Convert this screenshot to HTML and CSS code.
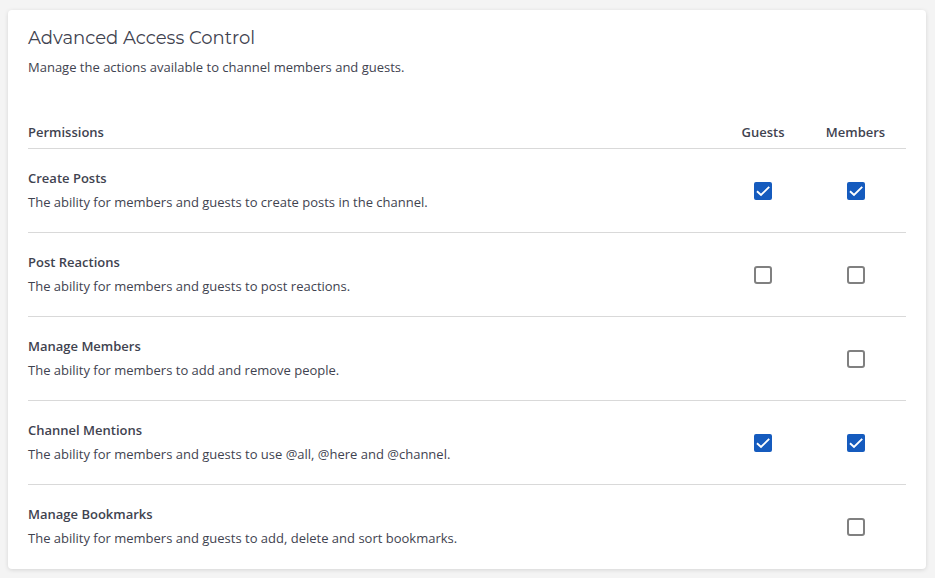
FILE: index.html
```html
<!DOCTYPE html>
<html lang="en">
<head>
<meta charset="utf-8">
<title>Advanced Access Control</title>
<link rel="stylesheet" href="styles.css">
</head>
<body>
<main class="panel">
  <header class="panel-header">
    <h1>Advanced Access Control</h1>
    <p>Manage the actions available to channel members and guests.</p>
  </header>
  <table class="permissions">
    <thead>
      <tr><th scope="col" class="name">Permissions</th><th scope="col" class="guests" id="guests">Guests</th><th scope="col" class="members" id="members">Members</th></tr>
    </thead>
    <tbody>
      <tr>
        <td class="name"><div class="title" id="posts">Create Posts</div><div class="description">The ability for members and guests to create posts in the channel.</div></td>
        <td><input type="checkbox" aria-labelledby="posts guests" checked></td>
        <td><input type="checkbox" aria-labelledby="posts members" checked></td>
      </tr>
      <tr>
        <td class="name"><div class="title" id="reactions">Post Reactions</div><div class="description">The ability for members and guests to post reactions.</div></td>
        <td><input type="checkbox" aria-labelledby="reactions guests"></td>
        <td><input type="checkbox" aria-labelledby="reactions members"></td>
      </tr>
      <tr>
        <td class="name"><div class="title" id="manage">Manage Members</div><div class="description">The ability for members to add and remove people.</div></td>
        <td></td>
        <td><input type="checkbox" aria-labelledby="manage members"></td>
      </tr>
      <tr>
        <td class="name"><div class="title" id="mentions">Channel Mentions</div><div class="description">The ability for members and guests to use @all, @here and @channel.</div></td>
        <td><input type="checkbox" aria-labelledby="mentions guests" checked></td>
        <td><input type="checkbox" aria-labelledby="mentions members" checked></td>
      </tr>
      <tr>
        <td class="name"><div class="title" id="bookmarks">Manage Bookmarks</div><div class="description">The ability for members and guests to add, delete and sort bookmarks.</div></td>
        <td></td>
        <td><input type="checkbox" aria-labelledby="bookmarks members"></td>
      </tr>
    </tbody>
  </table>
</main>
</body>
</html>
```
FILE: styles.css
```css
* {
  box-sizing: border-box;
}

body {
  margin: 0;
  padding: 10px 9px 9px 8px;
  background: #f4f4f4;
  color: #3f4350;
  font: 13px/20px "Open Sans", sans-serif;
}

.panel {
  padding: 16px 20px 0;
  background: #fff;
  border-radius: 4px;
  box-shadow: 0 1px 4px rgba(0, 0, 0, 0.13);
}

h1 {
  margin: 0;
  font: 400 18px/24px Metropolis, Montserrat, "Open Sans", sans-serif;
}

.panel-header p {
  margin: 7px 0 0;
}

.permissions {
  width: 100%;
  margin-top: 45px;
  border-collapse: collapse;
  table-layout: fixed;
}

th {
  padding: 0 0 6px;
  font-weight: 600;
}

td {
  height: 84px;
  padding: 0;
  text-align: center;
  vertical-align: middle;
}

.name {
  text-align: left;
}

td.name {
  padding-bottom: 2px;
}

.guests {
  width: 84px;
}

.members {
  width: 101px;
}

tr {
  border-bottom: 1px solid #d9d9d9;
}

tbody tr:last-child {
  border-bottom: 0;
}

.title {
  margin-bottom: 4px;
  font-weight: 600;
}

input {
  display: block;
  width: 18px;
  height: 18px;
  margin: 0 auto;
  appearance: none;
  border: 2px solid #808080;
  border-radius: 3px;
  background: #fff;
}

input:checked {
  border-color: #155bbe;
  border-radius: 2px;
  background: #155bbe url("data:image/svg+xml,%3Csvg xmlns='http://www.w3.org/2000/svg' viewBox='0 0 14 14'%3E%3Cpath d='M1 7.2 5 11 13.2 2.8' fill='none' stroke='white' stroke-width='1.9'/%3E%3C/svg%3E") center / 14px 14px no-repeat;
}
```
